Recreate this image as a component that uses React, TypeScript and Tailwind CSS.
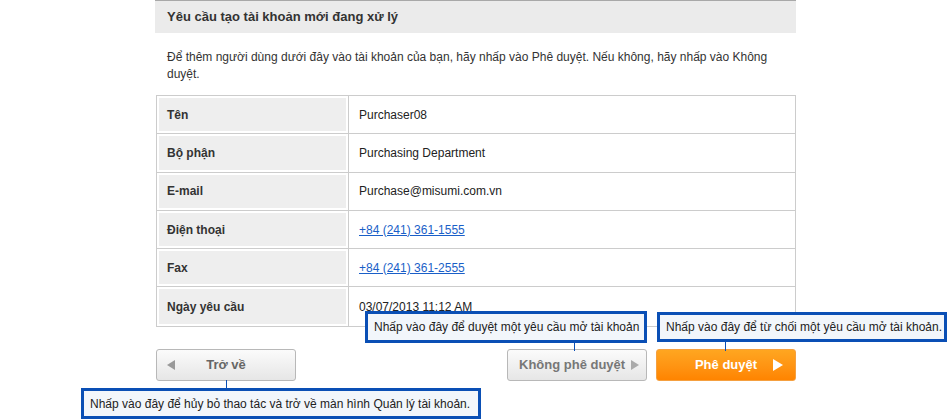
import React from "react";

const rows: { label: string; value: string; link?: boolean }[] = [
  { label: "Tên", value: "Purchaser08" },
  { label: "Bộ phận", value: "Purchasing Department" },
  { label: "E-mail", value: "Purchase@misumi.com.vn" },
  { label: "Điện thoại", value: "+84 (241) 361-1555", link: true },
  { label: "Fax", value: "+84 (241) 361-2555", link: true },
  { label: "Ngày yêu cầu", value: "03/07/2013 11:12 AM" },
];

function Callout({
  className,
  stemClass,
  children,
}: {
  className: string;
  stemClass: string;
  children: React.ReactNode;
}) {
  return (
    <div
      className={`absolute border-[3px] border-[#0a4fb5] bg-[#f2f6fb] text-[12px] text-[#222] flex items-center px-[6px] whitespace-nowrap ${className}`}
    >
      {children}
      <span className={`absolute w-px bg-[#0a4fb5] ${stemClass}`} />
    </div>
  );
}

export default function App() {
  return (
    <div className="relative w-[950px] h-[420px] bg-white overflow-hidden font-['Liberation_Sans',Arial,sans-serif] text-[#333]">
      <div className="ml-[155px] w-[641px]">
        <div className="h-[33px] bg-[#ebebeb] border-t border-[#a8a8a8] flex items-center pl-[12px] text-[13px] font-bold text-[#333]">
          Yêu cầu tạo tài khoản mới đang xử lý
        </div>
        <p className="mt-[16px] px-[12px] text-[12px] leading-[17px] text-[#333]">
          Để thêm người dùng dưới đây vào tài khoản của bạn, hãy nhấp vào Phê duyệt. Nếu không, hãy nhấp vào Không
          duyệt.
        </p>
        <div className="mt-[12px] ml-[1px] w-[640px] border border-[#cccccc]">
          {rows.map((r, i) => (
            <div
              key={r.label}
              className={`flex h-[38.3px] ${i < rows.length - 1 ? "border-b border-[#cccccc]" : ""}`}
            >
              <div className="w-[192px] p-[2px] border-r border-[#cccccc]">
                <div className="h-full bg-[#eeeeee] flex items-center pl-[8px] text-[12px] font-bold text-[#333]">
                  {r.label}
                </div>
              </div>
              <div className="flex-1 flex items-center pl-[10px] text-[12px] text-[#222]">
                {r.link ? (
                  <a href="#" className="text-[#1a5fc8] underline">
                    {r.value}
                  </a>
                ) : (
                  r.value
                )}
              </div>
            </div>
          ))}
        </div>
        <div className="mt-[22px] ml-[1px] flex items-center">
          <button className="w-[140px] h-[32px] rounded-[3px] border border-[#b8b8b8] bg-gradient-to-b from-[#fbfbfb] to-[#e6e6e6] text-[13px] font-bold text-[#666] flex items-center px-[10px]">
            <span className="w-0 h-0 border-y-[5px] border-y-transparent border-r-[8px] border-r-[#999]" />
            <span className="flex-1 text-center">Trở về</span>
            <span className="w-[8px]" />
          </button>
          <div className="flex-1" />
          <button className="w-[140px] h-[32px] rounded-[3px] border border-[#b8b8b8] bg-gradient-to-b from-[#fbfbfb] to-[#e6e6e6] text-[13px] font-bold text-[#777] flex items-center justify-between pl-[11px] pr-[7px]">
            <span>Không phê duyệt</span>
            <span className="w-0 h-0 border-y-[5px] border-y-transparent border-l-[8px] border-l-[#aaa]" />
          </button>
          <button className="relative ml-[9px] w-[140px] h-[32px] rounded-[3px] border border-[#f5a040] bg-gradient-to-b from-[#ffa620] to-[#ff8400] text-[13px] font-bold text-white flex items-center px-[12px]">
            <span className="w-[10px]" />
            <span className="flex-1 text-center">Phê duyệt</span>
            <span className="w-0 h-0 border-y-[6px] border-y-transparent border-l-[10px] border-l-white" />
          </button>
        </div>
      </div>

      <Callout className="left-[365px] top-[311px] w-[282px] h-[32px]" stemClass="left-[206px] top-[29px] h-[8px]">
        Nhấp vào đây để duyệt một yêu cầu mở tài khoản
      </Callout>
      <Callout className="left-[657px] top-[312px] w-[290px] h-[30px]" stemClass="left-[65px] top-[27px] h-[9px]">
        Nhấp vào đây để từ chối một yêu cầu mở tài khoản.
      </Callout>
      <Callout className="left-[81px] top-[388px] w-[400px] h-[31px]" stemClass="left-[142px] top-[-11px] h-[8px]">
        Nhấp vào đây để hủy bỏ thao tác và trở về màn hình Quản lý tài khoản.
      </Callout>
    </div>
  );
}
